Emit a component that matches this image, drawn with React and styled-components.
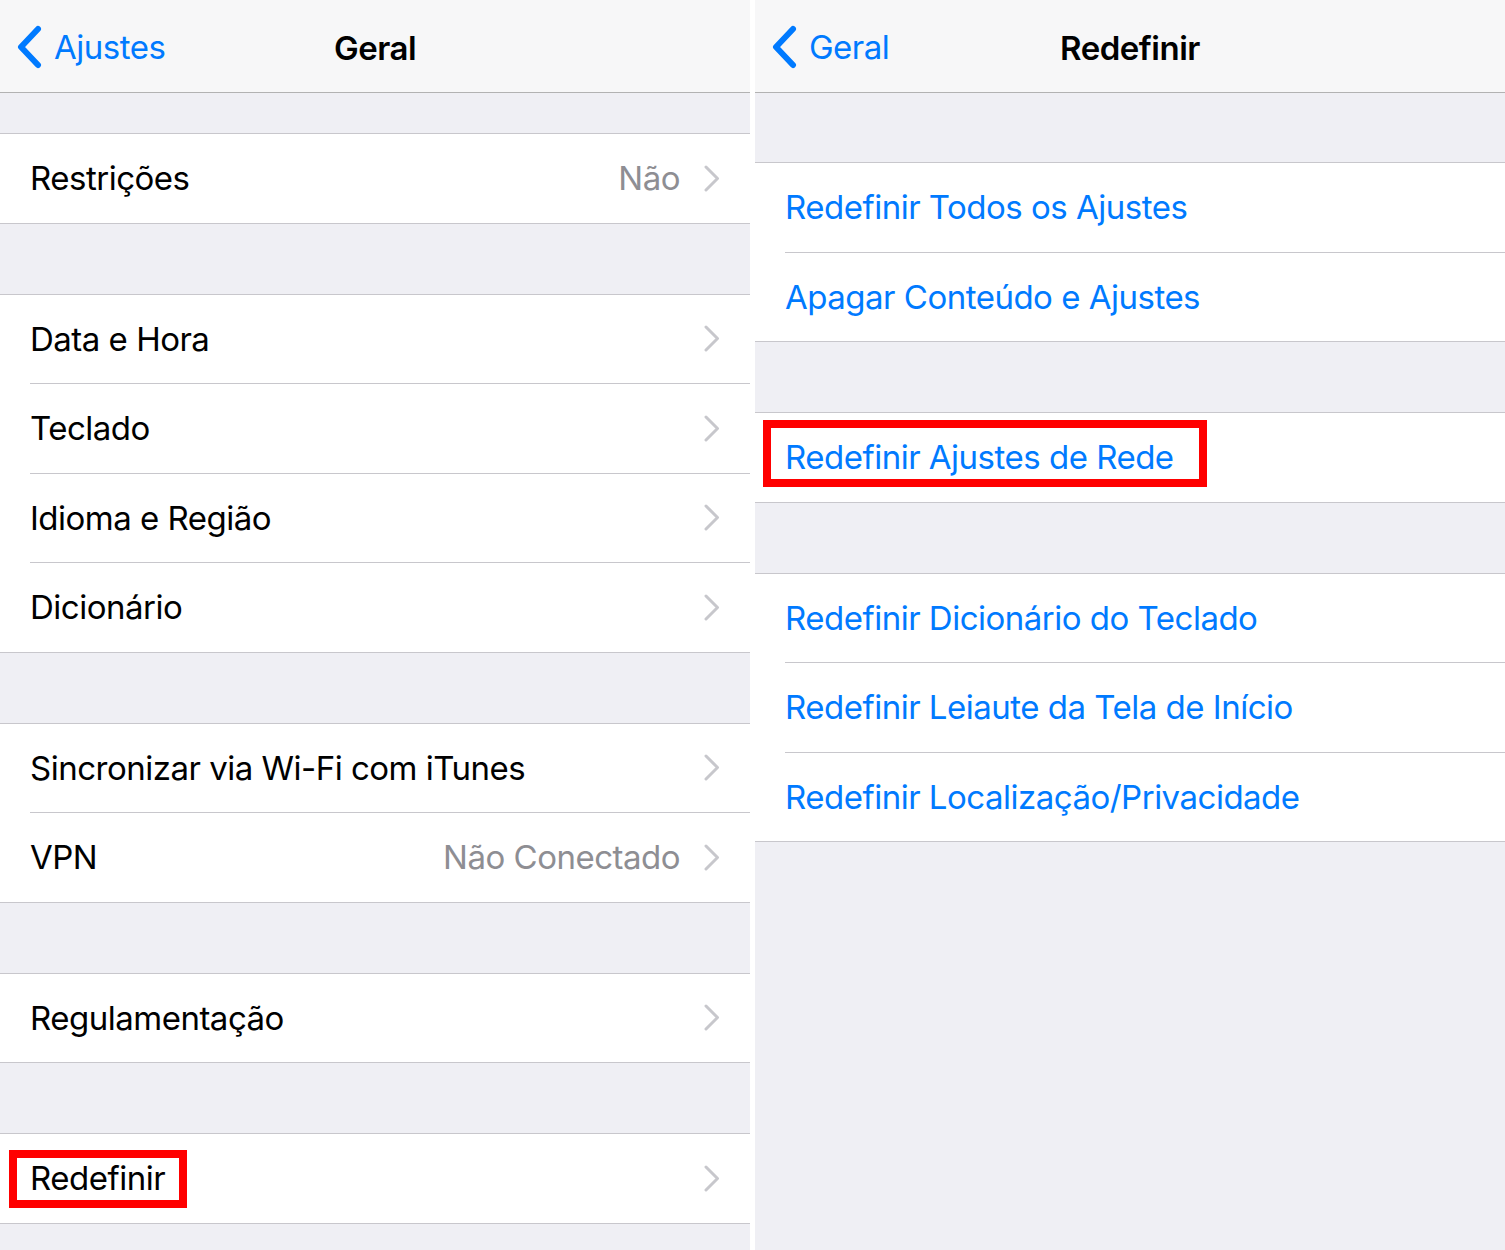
import React from "react";
import styled, { createGlobalStyle } from "styled-components";

const GlobalStyle = createGlobalStyle`
  html, body {
    margin: 0;
    padding: 0;
    background: #ffffff;
  }
  body {
    font-family: "Inter", "Roboto", "Liberation Sans", sans-serif;
    -webkit-font-smoothing: antialiased;
  }
`;

const Screen = styled.div`
  display: grid;
  grid-template-columns: 750px 750px;
  column-gap: 5px;
  width: 1505px;
  height: 1250px;
  overflow: hidden;
  background: #ffffff;
`;

const Panel = styled.div`
  background: #efeff4;
  height: 1250px;
  display: flex;
  flex-direction: column;
`;

const NavBar = styled.div`
  position: relative;
  height: 92px;
  background: #f7f7f8;
  border-bottom: 1px solid #b2b2b2;
  display: flex;
  align-items: center;
`;

const BackButton = styled.div`
  display: flex;
  align-items: center;
  gap: 12px;
  padding-left: 16px;
  padding-top: 2px;
  color: #007aff;
  font-size: 33px;
  letter-spacing: -0.5px;
`;

const Title = styled.div`
  position: absolute;
  left: 0;
  right: 0;
  top: 28px;
  text-align: center;
  font-size: 33px;
  font-weight: 600;
  color: #000;
  letter-spacing: -0.5px;
  pointer-events: none;
`;

const Group = styled.div`
  margin-top: ${(p) => p.$gap}px;
  background: #ffffff;
  border-top: 1px solid #c8c7cc;
  border-bottom: 1px solid #c8c7cc;
`;

const Row = styled.div`
  padding-left: 30px;
  background: #ffffff;

  & + & > div {
    border-top: 1px solid #c8c7cc;
  }
`;

const RowInner = styled.div`
  height: 88.5px;
  display: flex;
  align-items: center;
  padding-right: 30px;
`;

const Label = styled.span`
  position: relative;
  flex: 1;
  display: flex;
  font-size: 33px;
  line-height: 40px;
  letter-spacing: -0.5px;
  color: ${(p) => (p.$action ? "#007aff" : "#000000")};
`;

const Marked = styled.span`
  position: relative;

  &::after {
    content: "";
    position: absolute;
    left: ${(p) => p.$box[0]}px;
    right: ${(p) => p.$box[1]}px;
    top: ${(p) => p.$box[2]}px;
    bottom: ${(p) => p.$box[3]}px;
    border: 8px solid #ff0000;
  }
`;

const Value = styled.span`
  font-size: 33px;
  letter-spacing: -0.5px;
  color: #8e8e93;
  margin-right: 24px;
`;

const BackChevron = () => (
  <svg width="26" height="44" viewBox="0 0 26 44">
    <path
      d="M22 4 L5 22 L22 40"
      fill="none"
      stroke="#007aff"
      strokeWidth="6"
      strokeLinecap="round"
      strokeLinejoin="round"
    />
  </svg>
);

const Disclosure = () => (
  <svg width="16" height="27" viewBox="0 0 16 27">
    <path
      d="M2 2 L13.5 13.5 L2 25"
      fill="none"
      stroke="#c7c7cc"
      strokeWidth="3"
      strokeLinecap="round"
      strokeLinejoin="round"
    />
  </svg>
);

const generalGroups = [
  { gap: 40, rows: [{ label: "Restrições", value: "Não" }] },
  {
    gap: 70,
    rows: [
      { label: "Data e Hora" },
      { label: "Teclado" },
      { label: "Idioma e Região" },
      { label: "Dicionário" },
    ],
  },
  {
    gap: 70,
    rows: [
      { label: "Sincronizar via Wi-Fi com iTunes" },
      { label: "VPN", value: "Não Conectado" },
    ],
  },
  { gap: 70, rows: [{ label: "Regulamentação" }] },
  { gap: 70, rows: [{ label: "Redefinir", box: [-21, -22, -8, -10] }] },
];

const resetGroups = [
  {
    gap: 69,
    rows: [
      { label: "Redefinir Todos os Ajustes" },
      { label: "Apagar Conteúdo e Ajustes" },
    ],
  },
  {
    gap: 70,
    rows: [{ label: "Redefinir Ajustes de Rede", box: [-22, -33, -17, -10] }],
  },
  {
    gap: 70,
    rows: [
      { label: "Redefinir Dicionário do Teclado" },
      { label: "Redefinir Leiaute da Tela de Início" },
      { label: "Redefinir Localização/Privacidade" },
    ],
  },
];

const SettingsList = ({ groups, action }) =>
  groups.map((group, gi) => (
    <Group key={gi} $gap={group.gap}>
      {group.rows.map((row) => (
        <Row key={row.label}>
          <RowInner>
            <Label $action={action}>
              {row.box ? <Marked $box={row.box}>{row.label}</Marked> : row.label}
            </Label>
            {row.value && <Value>{row.value}</Value>}
            {!action && <Disclosure />}
          </RowInner>
        </Row>
      ))}
    </Group>
  ));

export default function App() {
  return (
    <>
      <GlobalStyle />
      <Screen>
        <Panel>
          <NavBar>
            <BackButton>
              <BackChevron />
              Ajustes
            </BackButton>
            <Title>Geral</Title>
          </NavBar>
          <SettingsList groups={generalGroups} />
        </Panel>
        <Panel>
          <NavBar>
            <BackButton>
              <BackChevron />
              Geral
            </BackButton>
            <Title>Redefinir</Title>
          </NavBar>
          <SettingsList groups={resetGroups} action />
        </Panel>
      </Screen>
    </>
  );
}
